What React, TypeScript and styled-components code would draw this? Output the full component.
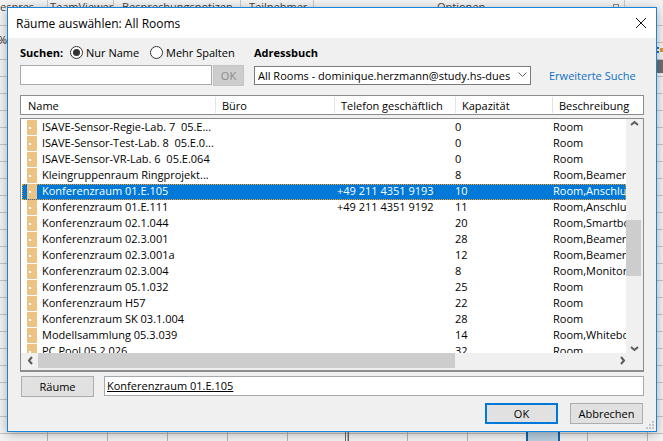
import React from "react";
import styled, { createGlobalStyle } from "styled-components";

const Global = createGlobalStyle`
  html, body { margin: 0; padding: 0; width: 663px; height: 441px; overflow: hidden; }
  body { font-family: "Open Sans", "Noto Sans", "Liberation Sans", sans-serif; font-size: 11px; color: #000; }
  * { box-sizing: border-box; }
`;

const Desktop = styled.div`
  position: relative;
  width: 663px;
  height: 441px;
  overflow: hidden;
  background-color: #f3f3f3;
  background-image:
    repeating-linear-gradient(to right, transparent 0 47px, #b4b4b4 47px 48px, transparent 48px 60px),
    repeating-linear-gradient(to bottom, transparent 0 8px, #c4c4c4 8px 9px, transparent 9px 17px);
`;

const TabStrip = styled.div`
  display: flex;
  height: 12px;
  background: #f3f3f3;
  color: #444;
  font-size: 11px;
  line-height: 14px;
`;

const Tab = styled.div<{ $w: number; $pad: number }>`
  width: ${(p) => p.$w}px;
  border-right: 1px solid #c8c8c8;
  padding-left: ${(p) => p.$pad}px;
  white-space: nowrap;
  overflow: hidden;
`;

const TabBox = styled.div`
  position: absolute;
  left: 613px;
  top: 4px;
  width: 6px;
  height: 6px;
  border: 1px solid #888;
`;

const SelectedCell = styled.div`
  position: absolute;
  left: 526px;
  top: 425px;
  width: 34px;
  height: 16px;
  background: #b8d0e2;
  border-left: 2px solid #1163a8;
  border-right: 2px solid #1163a8;
`;

const ColumnEdge = styled.div`
  position: absolute;
  left: 345px;
  top: 425px;
  width: 4px;
  height: 16px;
  border-left: 1px solid #666;
  border-right: 1px solid #666;
`;

const SideBar = styled.div`
  position: absolute;
  right: 0;
  top: 60px;
  width: 7px;
  height: 13px;
  background: #6f6f6f;
`;

const SideGlyph = styled.svg`
  position: absolute;
  left: 657px;
  top: 47px;
  width: 6px;
  height: 7px;
`;

const Percent = styled.div`
  position: absolute;
  left: -2px;
  top: 32px;
  font-size: 11px;
  color: #333;
`;

const Dialog = styled.div`
  position: absolute;
  left: 7px;
  top: 7px;
  width: 650px;
  height: 425px;
  background: #f0f0f0;
  border: 1px solid #1883d7;
  box-shadow: 0 2px 10px rgba(0, 0, 0, 0.3);
  display: flex;
  flex-direction: column;
`;

const TitleBar = styled.div`
  height: 30px;
  flex: none;
  background: #fff;
  display: flex;
  align-items: center;
  justify-content: space-between;
  padding: 0 8px 0 8px;
  font-size: 12px;
`;

const CloseIcon = styled.svg`
  width: 12px;
  height: 12px;
  margin-right: 1px;
`;

const Content = styled.div`
  flex: 1;
  display: flex;
  flex-direction: column;
  padding: 0 12px 0 12px;
  position: relative;
`;

const SearchRow = styled.div`
  display: flex;
  align-items: center;
  height: 18px;
  margin-top: 5px;
`;

const BoldLabel = styled.span`
  font-weight: 700;
  width: 50px;
  flex: none;
  white-space: nowrap;
`;

const Radio = styled.span<{ $on?: boolean }>`
  width: 13px;
  height: 13px;
  border-radius: 50%;
  border: 1px solid #333;
  background: #fff;
  flex: none;
  display: inline-flex;
  align-items: center;
  justify-content: center;
  margin-right: 3px;
  &::after {
    content: "";
    width: 7px;
    height: 7px;
    border-radius: 50%;
    background: ${(p) => (p.$on ? "#333" : "transparent")};
  }
`;

const RadioLabel = styled.span<{ $w: number }>`
  width: ${(p) => p.$w}px;
  flex: none;
  white-space: nowrap;
`;

const FieldRow = styled.div`
  display: flex;
  align-items: center;
  height: 20px;
  margin-top: 4px;
`;

const TextField = styled.div`
  width: 192px;
  height: 20px;
  background: #fff;
  border: 1px solid #a9a9a9;
  flex: none;
`;

const DisabledButton = styled.div`
  width: 31px;
  height: 21px;
  margin-left: 1px;
  background: #cdcdcd;
  color: #8a8a8a;
  border: 1px solid #c4c4c4;
  display: flex;
  align-items: center;
  justify-content: center;
  flex: none;
`;

const Select = styled.div`
  width: 277px;
  height: 19px;
  margin-left: 10px;
  background: #fff;
  border: 1px solid #7a7a7a;
  display: flex;
  align-items: center;
  padding-left: 3px;
  position: relative;
  overflow: hidden;
  flex: none;
  white-space: nowrap;
`;

const SelectText = styled.span`
  width: 255px;
  overflow: hidden;
  flex: none;
`;

const Chevron = styled.svg`
  width: 9px;
  height: 6px;
  margin-left: 5px;
  flex: none;
`;

const Link = styled.span`
  color: #0f6fc6;
  margin-left: 18px;
  white-space: nowrap;
`;

const HeaderRow = styled.div`
  display: flex;
  height: 20px;
  margin-top: 10px;
  width: 624px;
  background: #fff;
  border: 1px solid #8c8c8c;
  align-items: center;
  flex: none;
`;

const HeaderCell = styled.div<{ $w: number }>`
  width: ${(p) => p.$w}px;
  flex: none;
  height: 16px;
  line-height: 18px;
  padding-left: 6px;
  border-right: 1px solid #e3e3e3;
  white-space: nowrap;
  &:first-child { padding-left: 7px; }
  &:last-child { border-right: none; }
`;

const ListFrame = styled.div`
  width: 624px;
  height: 254px;
  margin-top: 3px;
  border: 1px solid #8c8c8c;
  border-bottom-width: 2px;
  background: #f0f0f0;
  display: grid;
  grid-template-columns: 605px 16px;
  grid-template-rows: 234px 15px;
  flex: none;
`;

const Rows = styled.div`
  background: #fff;
  overflow: hidden;
  padding-top: 1px;
`;

const RowEl = styled.div<{ $sel?: boolean }>`
  display: grid;
  grid-template-columns: 20px 295px 118px 98px 1fr;
  height: 16px;
  line-height: 14px;
  margin-left: 1px;
  white-space: pre;
  position: relative;
  background: ${(p) => (p.$sel ? "#0078d7" : "transparent")};
  color: ${(p) => (p.$sel ? "#fff" : "#000")};
  outline: ${(p) => (p.$sel ? "1px dotted #f59a23" : "none")};
  outline-offset: -1px;
`;

const Cell = styled.span`
  overflow: hidden;
`;

const RoomIcon = styled.span`
  width: 10px;
  height: 15px;
  margin-left: 5px;
  background: #ecc384;
  position: relative;
  &::after {
    content: "";
    position: absolute;
    left: 2px;
    top: 7px;
    width: 2px;
    height: 2px;
    background: #fff;
  }
`;

const VScroll = styled.div`
  background: #f0f0f0;
  display: flex;
  flex-direction: column;
  align-items: center;
  justify-content: space-between;
  position: relative;
`;

const VThumb = styled.div`
  position: absolute;
  top: 101px;
  left: 0;
  width: 15px;
  height: 56px;
  background: #cdcdcd;
`;

const HScroll = styled.div`
  background: #f0f0f0;
  display: flex;
  align-items: center;
  padding-left: 5px;
`;

const HThumb = styled.div`
  width: 417px;
  height: 15px;
  margin-left: 3px;
  background: #cdcdcd;
  flex: none;
`;

const ArrowIcon = styled.svg`
  width: 9px;
  height: 9px;
  flex: none;
`;

const ArrowRightWrap = styled.div`
  margin-left: 163px;
  display: flex;
`;

const Corner = styled.div`
  background: #f0f0f0;
`;

const RecipientRow = styled.div`
  display: flex;
  align-items: center;
  height: 20px;
  margin-top: 4px;
  margin-left: 1px;
`;

const FlatButton = styled.div<{ $w: number; $primary?: boolean }>`
  width: ${(p) => p.$w}px;
  height: 21px;
  background: #e1e1e1;
  border: ${(p) => (p.$primary ? "2px solid #0078d7" : "1px solid #adadad")};
  display: flex;
  align-items: center;
  justify-content: center;
  flex: none;
`;

const RecipientField = styled.div`
  width: 540px;
  height: 20px;
  margin-left: 10px;
  background: #fff;
  border: 1px solid #a9a9a9;
  padding-left: 2px;
  line-height: 17px;
  text-decoration: underline;
  flex: none;
`;

const Footer = styled.div`
  display: flex;
  justify-content: flex-end;
  gap: 12px;
  margin-top: 7px;
  width: 623px;
  ${FlatButton} { padding-bottom: 1px; }
`;

const Grip = styled.svg`
  position: absolute;
  right: 1px;
  bottom: 1px;
  width: 10px;
  height: 10px;
`;

type Room = { name: string; phone?: string; cap: string; desc: string; sel?: boolean };

const rooms: Room[] = [
  { name: "ISAVE-Sensor-Regie-Lab. 7  05.E...", cap: "0", desc: "Room" },
  { name: "ISAVE-Sensor-Test-Lab. 8  05.E.0...", cap: "0", desc: "Room" },
  { name: "ISAVE-Sensor-VR-Lab. 6  05.E.064", cap: "0", desc: "Room" },
  { name: "Kleingruppenraum Ringprojekt...", cap: "8", desc: "Room,Beamer," },
  { name: "Konferenzraum 01.E.105", phone: "+49 211 4351 9193", cap: "10", desc: "Room,Anschluss", sel: true },
  { name: "Konferenzraum 01.E.111", phone: "+49 211 4351 9192", cap: "11", desc: "Room,Anschluss" },
  { name: "Konferenzraum 02.1.044", cap: "20", desc: "Room,Smartboard" },
  { name: "Konferenzraum 02.3.001", cap: "28", desc: "Room,Beamer," },
  { name: "Konferenzraum 02.3.001a", cap: "12", desc: "Room,Beamer" },
  { name: "Konferenzraum 02.3.004", cap: "8", desc: "Room,Monitor" },
  { name: "Konferenzraum 05.1.032", cap: "25", desc: "Room" },
  { name: "Konferenzraum H57", cap: "22", desc: "Room" },
  { name: "Konferenzraum SK 03.1.004", cap: "28", desc: "Room" },
  { name: "Modellsammlung 05.3.039", cap: "14", desc: "Room,Whiteboard" },
  { name: "PC Pool 05.2.026", cap: "32", desc: "Room" },
];

const Arrow = ({ d }: { d: string }) => (
  <ArrowIcon viewBox="0 0 9 9">
    <path d={d} fill="none" stroke="#5a5a5a" strokeWidth="2" />
  </ArrowIcon>
);

export default function App() {
  return (
    <>
      <Global />
      <Desktop>
        <TabStrip>
          <Tab $w={48} $pad={0}>espres</Tab>
          <Tab $w={66} $pad={2}>TeamViewer</Tab>
          <Tab $w={127} $pad={8}>Besprechungsnotizen</Tab>
          <Tab $w={73} $pad={8}>Teilnehmer</Tab>
          <Tab $w={311} $pad={123}>Optionen</Tab>
        </TabStrip>
        <TabBox />
        <Percent>%</Percent>
        <SideGlyph viewBox="0 0 6 7">
          <path d="M0 0h2v2H0zM0 4h2v2H0z" fill="#2f6fb5" />
          <path d="M3 1h3v4H3z" fill="#d99a3c" />
        </SideGlyph>
        <SideBar />
        <SelectedCell />
        <ColumnEdge />
        <Dialog>
          <TitleBar>
            <span>Räume auswählen: All Rooms</span>
            <CloseIcon viewBox="0 0 12 12">
              <path d="M1 1 L11 11 M11 1 L1 11" stroke="#111" strokeWidth="1" fill="none" />
            </CloseIcon>
          </TitleBar>
          <Content>
            <SearchRow>
              <BoldLabel>Suchen:</BoldLabel>
              <Radio $on />
              <RadioLabel $w={64}>Nur Name</RadioLabel>
              <Radio />
              <RadioLabel $w={88}>Mehr Spalten</RadioLabel>
              <BoldLabel>Adressbuch</BoldLabel>
            </SearchRow>
            <FieldRow>
              <TextField />
              <DisabledButton>OK</DisabledButton>
              <Select>
                <SelectText>All Rooms - dominique.herzmann@study.hs-dues</SelectText>
                <Chevron viewBox="0 0 9 6">
                  <path d="M0.5 0.5 L4.5 4.5 L8.5 0.5" fill="none" stroke="#666" />
                </Chevron>
              </Select>
              <Link>Erweiterte Suche</Link>
            </FieldRow>
            <HeaderRow>
              <HeaderCell $w={195}>Name</HeaderCell>
              <HeaderCell $w={119}>Büro</HeaderCell>
              <HeaderCell $w={121}>Telefon geschäftlich</HeaderCell>
              <HeaderCell $w={97}>Kapazität</HeaderCell>
              <HeaderCell $w={90}>Beschreibung</HeaderCell>
            </HeaderRow>
            <ListFrame>
              <Rows>
                {rooms.map((r) => (
                  <RowEl key={r.name} $sel={r.sel}>
                    <RoomIcon />
                    <Cell>{r.name}</Cell>
                    <Cell>{r.phone ?? ""}</Cell>
                    <Cell>{r.cap}</Cell>
                    <Cell>{r.desc}</Cell>
                  </RowEl>
                ))}
              </Rows>
              <VScroll>
                <Arrow d="M1 6 L4.5 3 L8 6" />
                <VThumb />
                <Arrow d="M1 3 L4.5 6 L8 3" />
              </VScroll>
              <HScroll>
                <Arrow d="M6 1 L3 4.5 L6 8" />
                <HThumb />
                <ArrowRightWrap>
                  <Arrow d="M3 1 L6 4.5 L3 8" />
                </ArrowRightWrap>
              </HScroll>
              <Corner />
            </ListFrame>
            <RecipientRow>
              <FlatButton $w={73}>Räume</FlatButton>
              <RecipientField>Konferenzraum 01.E.105</RecipientField>
            </RecipientRow>
            <Footer>
              <FlatButton $w={73} $primary>OK</FlatButton>
              <FlatButton $w={73}>Abbrechen</FlatButton>
            </Footer>
            <Grip viewBox="0 0 10 10">
              <path d="M7 1h2v2H7zM4 4h2v2H4zM7 4h2v2H7zM1 7h2v2H1zM4 7h2v2H4zM7 7h2v2H7z" fill="#c4c4c4" />
            </Grip>
          </Content>
        </Dialog>
      </Desktop>
    </>
  );
}
